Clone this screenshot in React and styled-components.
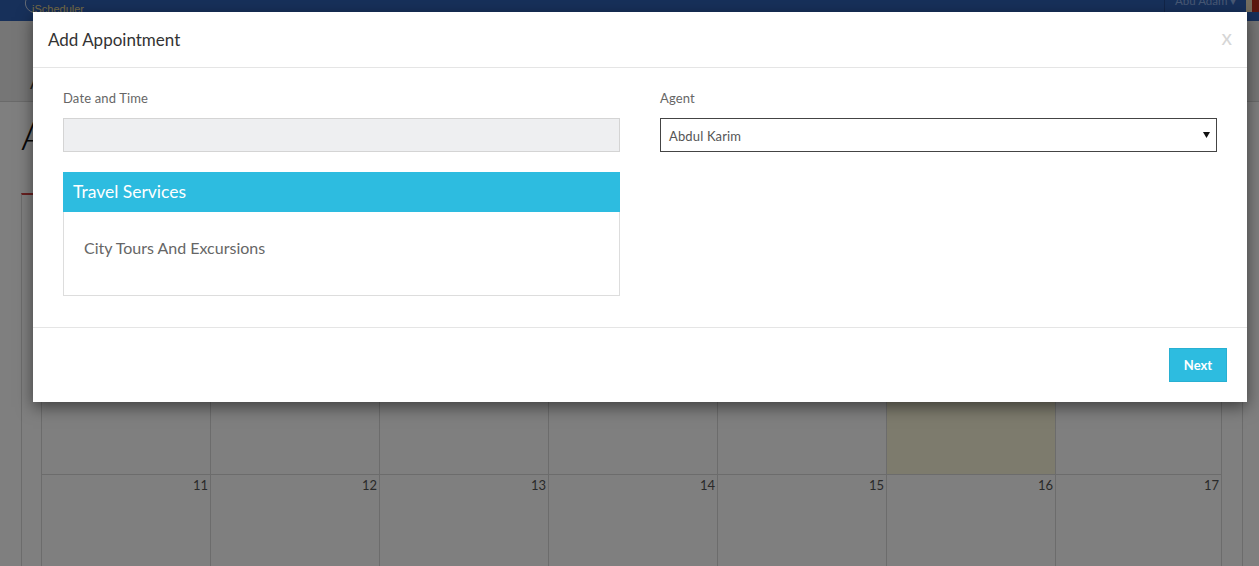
import React from 'react';
import styled, { createGlobalStyle } from 'styled-components';

const GlobalStyle = createGlobalStyle`
	html, body {
		margin: 0;
		padding: 0;
		height: 566px;
		overflow: hidden;
		background: #fff;
		font-family: Lato, "Open Sans", sans-serif;
	}
	* {
		box-sizing: border-box;
	}
`;

const weeks = [
	[null, null, null, null, null, null, null],
	[11, 12, 13, 14, 15, 16, 17],
];

const App = () => {
	return (
		<>
			<GlobalStyle />
			<Page>
				<TopBar>
					<Logo>
						<LogoArc viewBox="0 0 14 14"><path d="M3 0C1 5 4 12 13 13" /></LogoArc>
						<LogoText>iScheduler</LogoText>
					</Logo>
					<UserArea>
						<UserMenu>Abu Adam ▾</UserMenu>
						<Avatar />
					</UserArea>
				</TopBar>
				<SubHeader>
					<Breadcrumb>Appointments</Breadcrumb>
				</SubHeader>
				<Content>
					<PageTitle>Appointments</PageTitle>
					<CalendarPanel>
						<Calendar>
							{weeks.map((week, i) => (
								<Week key={i} $first={i === 0}>
									{week.map((day, j) => (
										<Day key={j} $today={i === 0 && j === 5}>{day}</Day>
									))}
								</Week>
							))}
						</Calendar>
					</CalendarPanel>
				</Content>
				<Overlay />
			</Page>
			<Modal>
				<ModalHeader>
					<ModalTitle>Add Appointment</ModalTitle>
					<Close>x</Close>
				</ModalHeader>
				<ModalBody>
					<Column>
						<Label>Date and Time</Label>
						<DateInput disabled />
						<ServiceBox>
							<ServiceTitle>Travel Services</ServiceTitle>
							<ServiceList>
								<ServiceItem>City Tours And Excursions</ServiceItem>
							</ServiceList>
						</ServiceBox>
					</Column>
					<Column>
						<Label>Agent</Label>
						<AgentSelect>
							<span>Abdul Karim</span>
							<Caret viewBox="0 0 7 6"><path d="M0 0h7L3.5 6z" /></Caret>
						</AgentSelect>
					</Column>
				</ModalBody>
				<ModalFooter>
					<NextButton>Next</NextButton>
				</ModalFooter>
			</Modal>
		</>
	);
};

const Page = styled.div`
	position: relative;
	height: 566px;
	overflow: hidden;
`;

const Overlay = styled.div`
	position: absolute;
	inset: 0;
	background: rgba(0, 0, 0, 0.5);
`;

const TopBar = styled.div`
	display: flex;
	justify-content: space-between;
	height: 21px;
	padding-left: 23px;
	background: #2f60b4;
	overflow: hidden;
`;

const Logo = styled.div`
	display: flex;
	align-items: flex-start;
`;

const LogoArc = styled.svg`
	width: 14px;
	height: 14px;
	margin-right: -5px;
	fill: none;
	stroke: #c8d4e8;
	stroke-width: 1;
`;

const LogoText = styled.span`
	padding-top: 3px;
	font-family: "Liberation Sans", sans-serif;
	font-size: 11px;
	line-height: 12px;
	color: #e8d890;
`;

const UserArea = styled.div`
	display: flex;
	height: 21px;
`;

const UserMenu = styled.div`
	width: 82px;
	padding-left: 10px;
	border-left: 1px solid #244a90;
	font-size: 11.5px;
	line-height: 2px;
	white-space: nowrap;
	color: #8fb0e8;
`;

const Avatar = styled.div`
	width: 13px;
	height: 12px;
	background: linear-gradient(90deg, #e8dcc0 0 45%, #b83020 45% 100%);
`;

const SubHeader = styled.div`
	height: 81px;
	padding: 50px 0 0 30px;
	background: #ececec;
	border-bottom: 1px solid #d4d4d4;
`;

const Breadcrumb = styled.div`
	font-size: 18px;
	line-height: 22px;
	color: #444;
`;

const Content = styled.div`
	padding: 0 16px 0 21px;
`;

const PageTitle = styled.h1`
	margin: 8px 0 33px;
	height: 50px;
	font-size: 40px;
	font-weight: 300;
	line-height: 50px;
	color: #111;
`;

const CalendarPanel = styled.div`
	border-top: 2px solid #d04040;
	border-left: 1px solid #d8d8d8;
	border-right: 1px solid #d8d8d8;
	padding: 0 20px 0 19px;
	height: 400px;
`;

const Calendar = styled.div`
	display: grid;
	grid-template-rows: 280px 1fr;
	height: 100%;
	border-right: 1px solid #d8d8d8;
`;

const Week = styled.div`
	display: grid;
	grid-template-columns: repeat(6, 169px) 1fr;
	border-bottom: ${({$first}) => ($first ? '1px solid #d8d8d8' : '0')};
`;

const Day = styled.div`
	padding: 2px 2px 0 0;
	text-align: right;
	font-size: 13px;
	color: #555;
	border-left: 1px solid #d8d8d8;
	background: ${({$today}) => ($today ? '#faf6da' : 'transparent')};
`;

const Modal = styled.div`
	position: absolute;
	top: 12px;
	left: 33px;
	width: 1214px;
	height: 390px;
	background: #fff;
	box-shadow: 0 5px 15px rgba(0, 0, 0, 0.5);
	display: flex;
	flex-direction: column;
	color: #555;
`;

const ModalHeader = styled.div`
	display: flex;
	justify-content: space-between;
	align-items: center;
	height: 56px;
	padding: 0 15px;
	border-bottom: 1px solid #e5e5e5;
`;

const ModalTitle = styled.h4`
	margin: 0;
	font-size: 17px;
	font-weight: 400;
	color: #333;
`;

const Close = styled.span`
	padding-bottom: 6px;
	font-size: 21px;
	font-weight: 400;
	color: #d6d6d6;
`;

const ModalBody = styled.div`
	display: grid;
	grid-template-columns: 557px 557px;
	column-gap: 40px;
	height: 259px;
	padding: 19px 30px;
`;

const Column = styled.div`
	display: flex;
	flex-direction: column;
`;

const Label = styled.label`
	font-size: 13px;
	line-height: 22px;
	letter-spacing: 0.15px;
	margin-bottom: 9px;
	color: #666;
`;

const DateInput = styled.input`
	height: 34px;
	background: #eeeff1;
	border: 1px solid #d4d4d4;
	padding: 0;
	margin: 0 0 20px;
`;

const ServiceBox = styled.div`
	display: flex;
	flex-direction: column;
`;

const ServiceTitle = styled.div`
	height: 40px;
	padding: 0 10px;
	background: #2dbce0;
	color: #fff;
	font-size: 17.5px;
	line-height: 40px;
`;

const ServiceList = styled.div`
	height: 84px;
	padding: 25px 20px 0;
	border: 1px solid #ddd;
	border-top: 0;
`;

const ServiceItem = styled.div`
	font-size: 16px;
	line-height: 22px;
	color: #666;
`;

const AgentSelect = styled.div`
	display: flex;
	justify-content: space-between;
	align-items: center;
	height: 34px;
	padding: 2px 6px 0 8px;
	border: 1px solid #444;
	font-size: 13px;
	letter-spacing: 0.15px;
	color: #555;
`;

const Caret = styled.svg`
	width: 7px;
	height: 6px;
	margin-bottom: 2px;
	fill: #111;
`;

const ModalFooter = styled.div`
	display: flex;
	justify-content: flex-end;
	align-items: flex-start;
	flex: 1;
	padding: 20px 20px 0;
	border-top: 1px solid #e5e5e5;
`;

const NextButton = styled.button`
	width: 58px;
	height: 34px;
	padding: 0;
	background: #2dbce0;
	border: 1px solid #28b0d2;
	color: #fff;
	font-family: inherit;
	font-size: 13px;
	font-weight: 700;
`;

export default App;
